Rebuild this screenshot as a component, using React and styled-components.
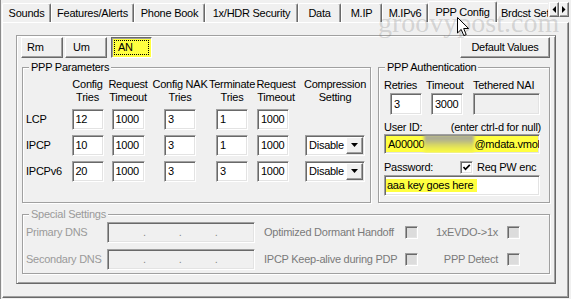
import React from 'react';
import styled, { createGlobalStyle } from 'styled-components';

const GlobalStyle = createGlobalStyle`
  html, body { margin: 0; padding: 0; background: #f0f0f0; }
  #root { width: 571px; height: 299px; }
`;

const YELLOW = '#ffff40';

const Window = styled.div`
  position: relative;
  box-sizing: border-box;
  width: 571px;
  height: 299px;
  overflow: hidden;
  background: #f0f0f0;
  border-left: 1px solid #8a8a8a;
  font-family: "Liberation Sans", Arial, sans-serif;
  font-size: 11px;
  letter-spacing: -0.25px;
  line-height: 13px;
  color: #000;
`;

const TabRow = styled.div`
  position: relative;
  z-index: 1;
  display: flex;
  height: 22px;
  padding-left: 1px;
`;

const TabScroller = styled.div`
  flex: none;
  width: 546px;
  display: flex;
  align-items: flex-end;
  overflow: hidden;
`;

const Tab = styled.div`
  flex: none;
  box-sizing: border-box;
  width: ${p => p.$w}px;
  height: ${p => (p.$active ? 22 : 19)}px;
  margin-bottom: ${p => (p.$active ? -1 : 0)}px;
  padding: 0 0 ${p => (p.$active ? 1 : 0)}px ${p => (p.$start ? 3 : 0)}px;
  display: flex;
  align-items: center;
  justify-content: ${p => (p.$start ? 'flex-start' : 'center')};
  white-space: nowrap;
  overflow: hidden;
  background: #f0f0f0;
  border-top: 1px solid #fff;
  border-left: 1px solid #fff;
  border-right: 1px solid #696969;
  border-top-left-radius: 2px;
  border-top-right-radius: 2px;
  box-shadow: inset -1px 0 0 #a0a0a0;
`;

const ScrollArrows = styled.div`
  display: flex;
  margin: 2px 0 0 1px;
  height: 15px;
`;

const ArrowBtn = styled.div`
  box-sizing: border-box;
  width: 10px;
  height: 15px;
  display: flex;
  align-items: center;
  justify-content: center;
  background: #f0f0f0;
  border: 1px solid;
  border-color: #fff #696969 #696969 #fff;
  box-shadow: inset -1px -1px 0 #a0a0a0;
`;

const Panel = styled.div`
  box-sizing: border-box;
  margin-left: 1px;
  width: 567px;
  height: 276px;
  border-top: 1px solid #fff;
  border-left: 1px solid #fff;
  border-right: 1px solid #696969;
  border-bottom: 1px solid #696969;
  box-shadow: inset -1px -1px 0 #a0a0a0;
  padding: 12px 0 0 13px;
`;

const Frame = styled.div`
  box-sizing: border-box;
  width: 540px;
  height: 249px;
  border: 1px solid;
  border-color: #a0a0a0 #696969 #696969 #a0a0a0;
  box-shadow: inset 1px 1px 0 #fff, inset -1px -1px 0 #a0a0a0;
  padding: 1px 4px 0 5px;
  display: flex;
  flex-direction: column;
`;

const ButtonRow = styled.div`
  display: flex;
  justify-content: space-between;
  height: 21px;
  margin: 0 1px 0 -1px;
`;

const ButtonGroup = styled.div`
  display: flex;
`;

const Button = styled.div`
  box-sizing: border-box;
  width: ${p => p.$w}px;
  height: 21px;
  margin-left: ${p => p.$ml || 0}px;
  padding-left: ${p => p.$pl || 0}px;
  display: flex;
  align-items: center;
  justify-content: ${p => (p.$pl ? 'flex-start' : 'center')};
  white-space: nowrap;
  background: ${p => (p.$on ? YELLOW : '#f0f0f0')};
  border: 1px solid;
  border-color: ${p => (p.$on ? '#696969 #fff #fff #696969' : '#fff #696969 #696969 #fff')};
  box-shadow: ${p => (p.$on ? 'inset 1px 1px 0 #a0a0a0' : 'inset -1px -1px 0 #a0a0a0')};
  outline: ${p => (p.$on ? '1px dotted #000' : 'none')};
  outline-offset: -4px;
`;

const GroupRow = styled.div`
  display: flex;
  gap: 7px;
  margin-top: 9px;
  align-items: stretch;
`;

const Group = styled.div`
  box-sizing: border-box;
  width: ${p => p.$w}px;
  margin-top: ${p => p.$mt || 0}px;
  border: 1px solid #a0a0a0;
  box-shadow: inset 1px 1px 0 #fff, 1px 1px 0 #fff;
  display: flex;
  flex-direction: column;
`;

const Legend = styled.div`
  width: fit-content;
  height: 13px;
  margin: -7px 0 0 6px;
  padding: 0 2px;
  background: #f0f0f0;
  white-space: nowrap;
  color: ${p => (p.$disabled ? '#9a9a9a' : '#000')};
`;

const ParamsGrid = styled.div`
  display: grid;
  grid-template-columns: 47px 35px 46px 58px 46px 36px 79px;
  grid-template-rows: 26px 21px 21px 21px;
  row-gap: 5px;
  margin-top: 3.5px;
  align-items: center;
`;

const HeadCell = styled.div`
  grid-column: ${p => p.$col};
  justify-self: ${p => (p.$w ? 'start' : 'center')};
  width: ${p => (p.$w ? `${p.$w}px` : 'max-content')};
  margin-left: ${p => p.$dx || 0}px;
  text-align: center;
  white-space: nowrap;
`;

const RowLabel = styled.div`
  grid-column: 1;
  padding-left: 3px;
  white-space: nowrap;
`;

const Edit = styled.div`
  box-sizing: border-box;
  width: ${p => p.$w}px;
  height: ${p => p.$h || 21}px;
  margin-left: ${p => p.$ml || 0}px;
  margin-top: ${p => p.$mt || 0}px;
  grid-column: ${p => p.$col || 'auto'};
  justify-self: center;
  padding-left: 3px;
  display: flex;
  align-items: center;
  overflow: hidden;
  white-space: nowrap;
  background: ${p => (p.$disabled ? '#f0f0f0' : p.$bg || '#fff')};
  border: 1px solid;
  border-color: #a0a0a0 #fff #fff #a0a0a0;
  box-shadow: inset 1px 1px 0 #696969, inset -1px -1px 0 #e3e3e3;
`;

const Combo = styled.div`
  box-sizing: border-box;
  grid-column: 7;
  justify-self: start;
  margin-left: 14px;
  width: 60px;
  height: 21px;
  display: flex;
  background: #fff;
  border: 1px solid;
  border-color: #a0a0a0 #fff #fff #a0a0a0;
  box-shadow: inset 1px 1px 0 #696969, inset -1px -1px 0 #e3e3e3;
  padding: 1px;
`;

const ComboText = styled.div`
  flex: 1;
  display: flex;
  align-items: center;
  padding-left: 2px;
  white-space: nowrap;
`;

const ComboButton = styled.div`
  box-sizing: border-box;
  width: 17px;
  display: flex;
  align-items: center;
  justify-content: center;
  background: #f0f0f0;
  border: 1px solid;
  border-color: #fff #696969 #696969 #fff;
  box-shadow: inset -1px -1px 0 #a0a0a0;
`;

const AuthBody = styled.div`
  display: flex;
  flex-direction: column;
  padding: 4.5px 8px 6px 5px;
`;

const AuthTop = styled.div`
  display: grid;
  grid-template-columns: 42px 47px 67px;
`;

const Stack = styled.div`
  display: flex;
  flex-direction: column;
  align-items: flex-start;
`;

const Caption = styled.div`
  height: 13px;
  white-space: nowrap;
`;

const SplitRow = styled.div`
  display: flex;
  justify-content: space-between;
  align-items: center;
  height: 13px;
  margin-top: ${p => p.$mt}px;
  white-space: nowrap;
`;

const CheckRow = styled.div`
  display: flex;
  align-items: center;
  height: 13px;
  margin-top: ${p => p.$mt}px;
  white-space: nowrap;
`;

const FixedLabel = styled.div`
  width: ${p => p.$w}px;
`;

const CheckBox = styled.div`
  box-sizing: border-box;
  width: 13px;
  height: 13px;
  margin-right: ${p => p.$mr || 0}px;
  display: flex;
  align-items: center;
  justify-content: center;
  background: ${p => (p.$disabled ? '#dcdcdc' : '#fff')};
  border: 1px solid;
  border-color: #a0a0a0 #fff #fff #a0a0a0;
  box-shadow: inset 1px 1px 0 #696969, inset -1px -1px 0 #e3e3e3;
`;

const Blurred = styled.span`
  flex: none;
  width: 50px;
  height: 100%;
  background: linear-gradient(#a4a4a0 0%, #b4b48a 30%, #dede5c 60%, ${YELLOW} 100%);
  filter: blur(1.5px);
`;

const Highlight = styled.span`
  background: ${YELLOW};
  padding: 0 4px 0 1px;
  margin-left: -2px;
`;

const SpecialGrid = styled.div`
  display: grid;
  grid-template-columns: 84px 157px 141px 13px 89px 13px;
  grid-template-rows: 21px 21px;
  row-gap: 6px;
  margin-top: 1px;
  padding-bottom: 3px;
  align-items: center;
`;

const DimLabel = styled.div`
  padding-left: ${p => p.$pl || 0}px;
  padding-right: ${p => p.$pr || 0}px;
  text-align: ${p => p.$align || 'left'};
  white-space: nowrap;
  color: ${p => p.$tone || '#9a9a9a'};
`;

const IpField = styled.div`
  box-sizing: border-box;
  width: 148px;
  height: 21px;
  display: flex;
  align-items: center;
  gap: 33px;
  padding-left: 35px;
  color: #8a8a8a;
  background: #f0f0f0;
  border: 1px solid;
  border-color: #a0a0a0 #fff #fff #a0a0a0;
  box-shadow: inset 1px 1px 0 #696969, inset -1px -1px 0 #e3e3e3;
`;

const Watermark = styled.div`
  position: absolute;
  left: 377px;
  top: 9px;
  z-index: 5;
  font-family: "Liberation Serif", "Times New Roman", serif;
  font-size: 28px;
  line-height: 28px;
  letter-spacing: 0;
  color: rgba(110, 110, 110, 0.24);
  pointer-events: none;
  white-space: nowrap;
`;

const Cursor = styled.svg`
  position: absolute;
  left: 456px;
  top: 17px;
  z-index: 6;
`;

const tabs = [
  { label: 'Sounds', w: 49 },
  { label: 'Features/Alerts', w: 83 },
  { label: 'Phone Book', w: 71 },
  { label: '1x/HDR Security', w: 93 },
  { label: 'Data', w: 43 },
  { label: 'M.IP', w: 41 },
  { label: 'M.IPv6', w: 46 },
  { label: 'PPP Config', w: 69, active: true },
  { label: 'Brdcst Settings', w: 90, start: true },
];

const rows = [
  { name: 'LCP', vals: ['12', '1000', '3', '1', '1000'], combo: false },
  { name: 'IPCP', vals: ['10', '1000', '3', '1', '1000'], combo: true },
  { name: 'IPCPv6', vals: ['20', '1000', '3', '3', '1000'], combo: true },
];

const colWidths = [32, 33, 32, 32, 32];

const Tri = ({ dir }) => {
  const pts = {
    left: '4,0 4,7 0.5,3.5',
    right: '0,0 0,7 3.5,3.5',
  };
  return (
    <svg width="4" height="7" viewBox="0 0 4 7">
      <polygon points={pts[dir]} fill="#000" />
    </svg>
  );
};

const DownTri = () => (
  <svg width="7" height="4" viewBox="0 0 7 4">
    <polygon points="0,0 7,0 3.5,4" fill="#000" />
  </svg>
);

const Check = () => (
  <svg width="9" height="9" viewBox="0 0 9 9">
    <polyline points="1.5,4 3.5,6.3 7.8,1.8" fill="none" stroke="#000" strokeWidth="1.7" />
  </svg>
);

export default function App() {
  return (
    <>
      <GlobalStyle />
      <Window>
        <TabRow>
          <TabScroller>
            {tabs.map(t => (
              <Tab key={t.label} $w={t.w} $active={t.active} $start={t.start}>
                {t.label}
              </Tab>
            ))}
          </TabScroller>
          <ScrollArrows>
            <ArrowBtn><Tri dir="left" /></ArrowBtn>
            <ArrowBtn><Tri dir="right" /></ArrowBtn>
          </ScrollArrows>
        </TabRow>

        <Panel>
          <Frame>
            <ButtonRow>
              <ButtonGroup>
                <Button $w={42} $pl={5}>Rm</Button>
                <Button $w={42} $pl={7} $ml={2}>Um</Button>
                <Button $w={41} $pl={6} $ml={4} $on>AN</Button>
              </ButtonGroup>
              <Button $w={90}>Default Values</Button>
            </ButtonRow>

            <GroupRow>
              <Group $w={349}>
                <Legend>PPP Parameters</Legend>
                <ParamsGrid>
                  <HeadCell $col={2}>Config<br />Tries</HeadCell>
                  <HeadCell $col={3}>Request<br />Timeout</HeadCell>
                  <HeadCell $col={4}>Config NAK<br />Tries</HeadCell>
                  <HeadCell $col={5}>Terminate<br />Tries</HeadCell>
                  <HeadCell $col={6} $dx={6}>Request<br />Timeout</HeadCell>
                  <HeadCell $col={7} $w={70} $dx={9}>Compression<br />Setting</HeadCell>
                  {rows.map(r => (
                    <React.Fragment key={r.name}>
                      <RowLabel>{r.name}</RowLabel>
                      {r.vals.map((v, i) => (
                        <Edit key={i} $col={i + 2} $w={colWidths[i]}>{v}</Edit>
                      ))}
                      {r.combo && (
                        <Combo>
                          <ComboText>Disable</ComboText>
                          <ComboButton><DownTri /></ComboButton>
                        </Combo>
                      )}
                    </React.Fragment>
                  ))}
                </ParamsGrid>
              </Group>

              <Group $w={172}>
                <Legend>PPP Authentication</Legend>
                <AuthBody>
                  <AuthTop>
                    <Stack>
                      <Caption>Retries</Caption>
                      <Edit $w={32} $h={22} $ml={6} $mt={1.5}>3</Edit>
                    </Stack>
                    <Stack>
                      <Caption>Timeout</Caption>
                      <Edit $w={32} $h={22} $ml={5} $mt={1.5}>3000</Edit>
                    </Stack>
                    <Stack>
                      <Caption>Tethered NAI</Caption>
                      <Edit $w={67} $h={22} $mt={1.5} $disabled />
                    </Stack>
                  </AuthTop>
                  <SplitRow $mt={5.5}>
                    <span>User ID:</span>
                    <span>(enter ctrl-d for null)</span>
                  </SplitRow>
                  <Edit $w={156} $h={20} $mt={0.5} $bg={YELLOW}>
                    <span>A00000</span>
                    <Blurred />
                    <span>@mdata.vmobile.com</span>
                  </Edit>
                  <CheckRow $mt={6.5}>
                    <FixedLabel $w={76}>Password:</FixedLabel>
                    <CheckBox $mr={4}><Check /></CheckBox>
                    <span>Req PW enc</span>
                  </CheckRow>
                  <Edit $w={156} $h={21} $mt={1.5}>
                    <Highlight>aaa key goes here</Highlight>
                  </Edit>
                </AuthBody>
              </Group>
            </GroupRow>

            <Group $w={528} $mt={11}>
              <Legend $disabled>Special Settings</Legend>
              <SpecialGrid>
                <DimLabel $pl={3}>Primary DNS</DimLabel>
                <IpField><span>.</span><span>.</span><span>.</span></IpField>
                <DimLabel $tone="#7a7a7a">Optimized Dormant Handoff</DimLabel>
                <CheckBox $disabled />
                <DimLabel $tone="#7a7a7a" $align="right" $pr={9}>1xEVDO-&gt;1x</DimLabel>
                <CheckBox $disabled />

                <DimLabel $pl={3}>Secondary DNS</DimLabel>
                <IpField><span>.</span><span>.</span><span>.</span></IpField>
                <DimLabel $tone="#7a7a7a">IPCP Keep-alive during PDP</DimLabel>
                <CheckBox $disabled />
                <DimLabel $tone="#7a7a7a" $align="right" $pr={9}>PPP Detect</DimLabel>
                <CheckBox $disabled />
              </SpecialGrid>
            </Group>
          </Frame>
        </Panel>

        <Watermark>groovypost.com</Watermark>
        <Cursor width="13" height="20" viewBox="0 0 13 20">
          <path
            d="M0.5 0.5 L0.5 16 L4.2 12.4 L6.8 18.6 L9.2 17.6 L6.7 11.5 L11.6 11.5 Z"
            fill="#fff"
            stroke="#000"
            strokeWidth="1"
            strokeLinejoin="miter"
          />
        </Cursor>
      </Window>
    </>
  );
}
